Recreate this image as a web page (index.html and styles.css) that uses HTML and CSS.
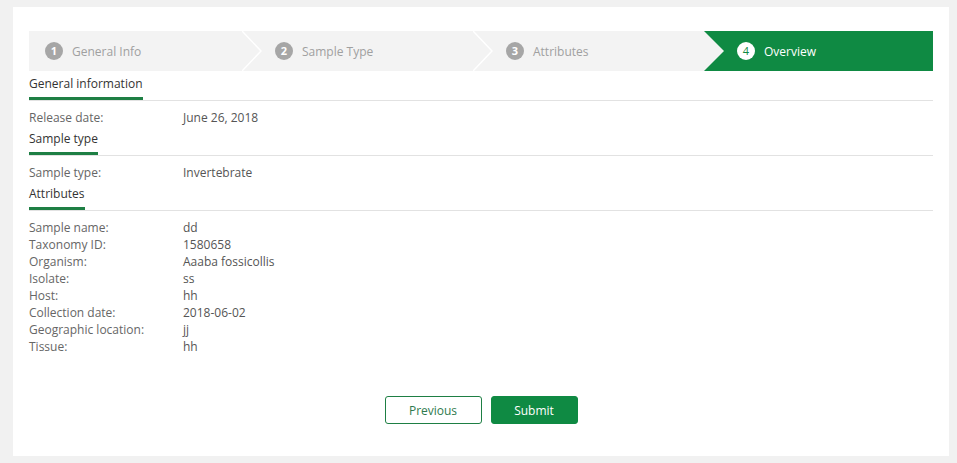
FILE: index.html
```html
<!DOCTYPE html>
<html lang="en">
<head>
    <meta charset="UTF-8">
    <meta name="viewport" content="width=device-width, initial-scale=1.0">
    <title>Submission Overview</title>
    <link rel="stylesheet" href="styles.css">
</head>
<body>
    <div class="card">
        <ol class="steps">
            <li class="step first">
                <span class="num">1</span>
                <span>General Info</span>
            </li>
            <li class="step">
                <svg class="chevron" width="20" height="40" viewBox="0 0 20 40"><polyline points="0,0 19,20 0,40" fill="none" stroke="#fff" stroke-width="1.5"/></svg>
                <span class="num">2</span>
                <span>Sample Type</span>
            </li>
            <li class="step">
                <svg class="chevron" width="20" height="40" viewBox="0 0 20 40"><polyline points="0,0 19,20 0,40" fill="none" stroke="#fff" stroke-width="1.5"/></svg>
                <span class="num">3</span>
                <span>Attributes</span>
            </li>
            <li class="step active">
                <span class="num">4</span>
                <span>Overview</span>
            </li>
        </ol>

        <div class="section">
            <div class="section-head"><h4>General information</h4></div>
            <dl class="rows">
                <dt>Release date:</dt><dd>June 26, 2018</dd>
            </dl>
        </div>

        <div class="section">
            <div class="section-head"><h4>Sample type</h4></div>
            <dl class="rows">
                <dt>Sample type:</dt><dd>Invertebrate</dd>
            </dl>
        </div>

        <div class="section">
            <div class="section-head"><h4>Attributes</h4></div>
            <dl class="rows">
                <dt>Sample name:</dt><dd>dd</dd>
                <dt>Taxonomy ID:</dt><dd>1580658</dd>
                <dt>Organism:</dt><dd>Aaaba fossicollis</dd>
                <dt>Isolate:</dt><dd>ss</dd>
                <dt>Host:</dt><dd>hh</dd>
                <dt>Collection date:</dt><dd>2018-06-02</dd>
                <dt>Geographic location:</dt><dd>jj</dd>
                <dt>Tissue:</dt><dd>hh</dd>
            </dl>
        </div>

        <div class="actions">
            <button class="btn btn-outline">Previous</button>
            <button class="btn btn-primary">Submit</button>
        </div>
    </div>
</body>
</html>
```

FILE: styles.css
```css
body {
    font-family: "Open Sans", Arial, sans-serif;
    font-size: 12px;
    background-color: #f1f1f1;
    margin: 7px 8px 0 13px;
    padding: 0;
}
.card {
    background-color: white;
    height: 449px;
    box-sizing: border-box;
    padding: 24px 16px 0 16px;
}
.steps {
    display: flex;
    list-style: none;
    margin: 0;
    padding: 0;
    height: 40px;
    background-color: #f3f3f3;
}
.step {
    flex: 0 0 231px;
    box-sizing: border-box;
    display: flex;
    align-items: center;
    color: #a0a0a0;
    font-size: 12px;
}
.step.first {
    flex: 0 0 213px;
    padding-left: 16px;
}
.step .chevron {
    flex: none;
    margin-right: 13px;
}
.step .num {
    width: 18px;
    height: 18px;
    border-radius: 50%;
    background-color: #a6a6a6;
    color: white;
    font-weight: bold;
    font-size: 11px;
    line-height: 18px;
    text-align: center;
    margin-right: 9px;
}
.step.active {
    flex: 1;
    background-color: #0f8a43;
    color: white;
    padding-left: 33px;
    clip-path: polygon(0 0, 100% 0, 100% 100%, 0 100%, 20px 50%);
}
.step.active .num {
    background-color: white;
    color: #0f8a43;
    font-weight: normal;
}
.section-head {
    border-bottom: 1px solid #e2e2e2;
}
.section-head h4 {
    display: inline-block;
    margin: 0;
    padding: 4px 0 4px;
    line-height: 18px;
    font-size: 12px;
    font-weight: normal;
    color: #333;
    border-bottom: 3px solid #1e7f44;
}
.rows {
    display: grid;
    grid-template-columns: 154px 1fr;
    margin: 0;
    padding-top: 8px;
    line-height: 17px;
    color: #666;
}
.rows dt, .rows dd {
    margin: 0;
}
.rows dd {
    color: #555;
}
.actions {
    display: flex;
    justify-content: center;
    gap: 9px;
    margin-top: 41px;
}
.btn {
    font-family: "Open Sans", Arial, sans-serif;
    font-size: 12px;
    height: 28px;
    border-radius: 3px;
    cursor: pointer;
}
.btn-outline {
    width: 97px;
    background-color: white;
    border: 1px solid #1e7f44;
    color: #2f7a4e;
}
.btn-primary {
    width: 87px;
    background-color: #0f8a43;
    border: 1px solid #0f8a43;
    color: white;
}
```
